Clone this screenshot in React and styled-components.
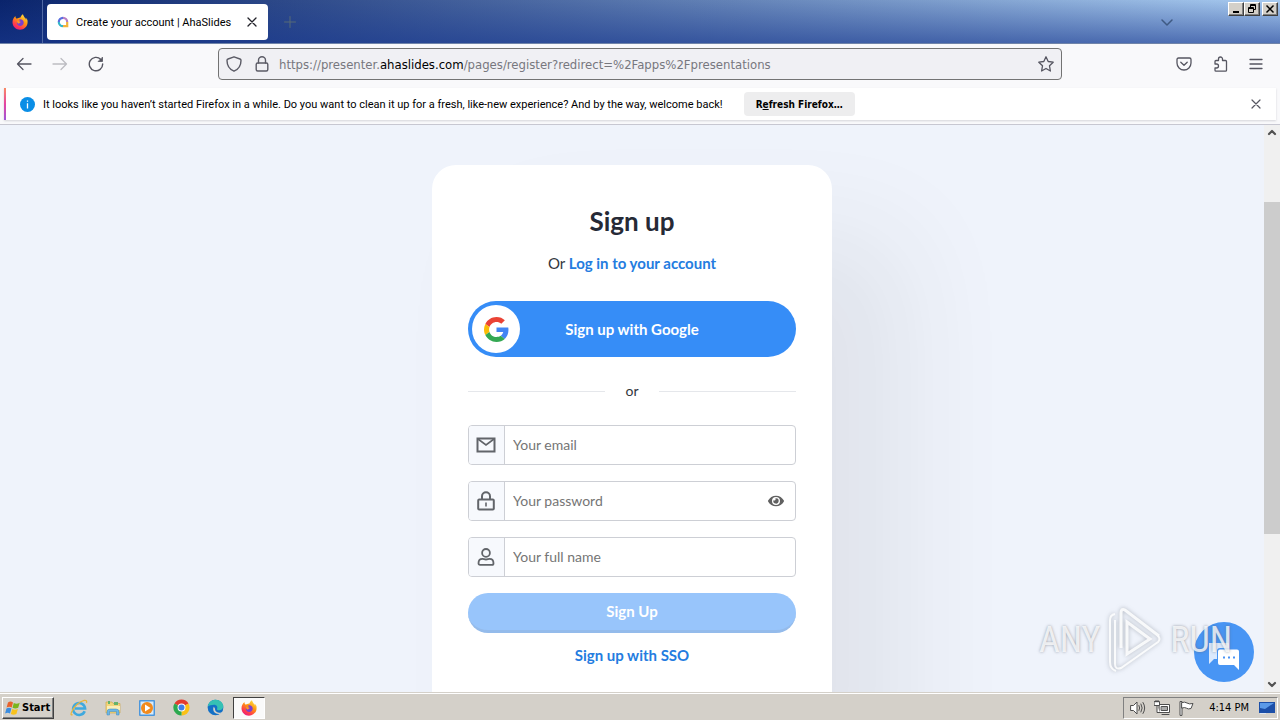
import React from "react";
import styled, { createGlobalStyle, css } from "styled-components";
import { FaEye } from "react-icons/fa";

const GlobalStyle = createGlobalStyle`
  :root {
    --ui: Roboto, Tahoma, sans-serif;
    --uiWide: "DejaVu Sans Condensed", "DejaVu Sans", Tahoma, sans-serif;
    --site: Lato, Nunito, sans-serif;
    --blue: hsl(213, 92%, 59%);
    --link: hsl(212, 75%, 51%);
    --classic: hsl(40, 12%, 81%);
    --icon: hsl(240, 6%, 36%);
  }
  * {
    box-sizing: border-box;
  }
  body {
    margin: 0;
    overflow: hidden;
  }
  button,
  input {
    font: inherit;
    color: inherit;
    margin: 0;
  }
  svg {
    display: block;
    flex: none;
  }
`;

const raised = css`
  border: 1px solid;
  border-color: white hsl(0, 0%, 25%) hsl(0, 0%, 25%) white;
  box-shadow: inset -1px -1px 0 hsl(0, 0%, 50%);
`;

const Desktop = styled.div`
  display: flex;
  flex-direction: column;
  height: 100vh;
  font-family: var(--ui);
  font-size: 11px;
  color: black;
`;

/* browser */

const TabBar = styled.header`
  display: flex;
  flex: none;
  height: 44px;
  border-bottom: 1px solid hsl(219, 25%, 55%);
  background: linear-gradient(
      to bottom,
      hsla(224, 83%, 23%, 0),
      hsla(224, 70%, 33%, 0.6)
    ),
    linear-gradient(to right, hsl(224, 83%, 23%), hsl(211, 71%, 80%));
`;

const FirefoxView = styled.button`
  display: flex;
  align-items: center;
  justify-content: center;
  width: 43px;
  padding: 0 3px 0 0;
  border: 0;
  border-right: 1px solid hsl(222, 35%, 48%);
  background: none;
`;

const Tab = styled.div`
  display: flex;
  align-items: center;
  width: 221px;
  margin: 4px 0 3px 4px;
  padding: 0 8px 0 10px;
  border-radius: 4px;
  background: white;
  white-space: nowrap;
`;

const TabTitle = styled.span`
  flex: 1;
  margin-left: 7px;
`;

const IconButton = styled.button`
  display: flex;
  align-items: center;
  justify-content: center;
  flex: none;
  width: 16px;
  height: 16px;
  padding: 0;
  border: 0;
  background: none;
  color: ${props => props.$color || "var(--icon)"};
`;

const TabActions = styled.div`
  display: flex;
  align-items: center;
  justify-content: space-between;
  flex: 1;
  padding: 0 53px 0 14px;
`;

const WindowButtons = styled.div`
  display: flex;
  padding: 2px 2px 0 0;
`;

const WindowButton = styled.button`
  ${raised};
  display: flex;
  align-items: center;
  justify-content: center;
  width: 16px;
  height: 14px;
  padding: 0;
  background: var(--classic);
  &:last-child {
    margin-left: 2px;
  }
`;

const Toolbar = styled.nav`
  display: grid;
  grid-template-columns: 1fr minmax(0, 844px) 1fr;
  align-items: center;
  flex: none;
  height: 44px;
  padding-bottom: 4px;
  background: hsl(240, 20%, 98%);
`;

const ToolGroup = styled.div`
  display: flex;
  gap: 20px;
  padding: 0 16px;
  justify-content: ${props => (props.$end ? "flex-end" : "flex-start")};
`;

const UrlBar = styled.div`
  display: flex;
  align-items: center;
  height: 32px;
  padding: 0 7px;
  gap: 12px;
  border: 1px solid hsl(0, 0%, 45%);
  border-radius: 4px;
  background: hsl(240, 14%, 95%);
  color: hsl(240, 3%, 48%);
`;

const Url = styled.div`
  flex: 1;
  margin-left: -3px;
  font-family: var(--uiWide);
  font-size: 13px;
  white-space: nowrap;
  overflow: hidden;
  b {
    font-weight: 400;
    color: black;
  }
`;

const NoticeWrap = styled.div`
  flex: none;
  padding: 0 4px 4px;
  border-bottom: 1px solid hsl(240, 10%, 80%);
  background: hsl(240, 20%, 98%);
`;

const Notice = styled.section`
  display: flex;
  align-items: center;
  height: 32px;
  padding: 0 12px 0 14px;
  border-left: 2px solid;
  border-image: linear-gradient(hsl(18, 95%, 68%), hsl(325, 75%, 58%), hsl(270, 65%, 60%)) 1;
  background: white;
  box-shadow: 0 1px 2px hsla(240, 10%, 30%, 0.2);
`;

const NoticeText = styled.p`
  margin: 0 21px 0 8px;
  white-space: nowrap;
`;

const RefreshButton = styled.button`
  height: 24px;
  padding: 0 12px;
  border: 0;
  border-radius: 4px;
  background: hsl(240, 3%, 93%);
  font-family: var(--uiWide);
  font-size: 10px;
  font-weight: 700;
  white-space: nowrap;
`;

const Spacer = styled.span`
  flex: 1;
`;

/* page */

const Viewport = styled.div`
  display: flex;
  flex: 1;
  min-height: 0;
  position: relative;
`;

const Page = styled.main`
  display: flex;
  align-items: flex-start;
  justify-content: center;
  flex: 1;
  overflow: hidden;
  padding-top: 40px;
  background: hsl(220, 60%, 96%);
  font-family: var(--site);
  font-size: 15px;
  color: hsl(220, 10%, 22%);
`;

const Card = styled.form`
  display: flex;
  flex-direction: column;
  width: 100%;
  max-width: 400px;
  padding: 40px 36px 80px;
  border-radius: 24px;
  background: white;
  box-shadow: 72px 72px 110px hsla(220, 10%, 20%, 0.08);
`;

const Title = styled.h1`
  margin: 0;
  font-size: 26px;
  line-height: 32px;
  font-weight: 700;
  text-align: center;
  color: hsl(225, 18%, 18%);
`;

const LoginLine = styled.p`
  margin: 16px 0 28px;
  line-height: 20px;
  text-align: center;
`;

const Link = styled.a`
  color: var(--link);
  font-weight: 700;
  text-decoration: none;
  text-align: center;
`;

const GoogleButton = styled.button`
  display: grid;
  grid-template-columns: 48px 1fr 48px;
  align-items: center;
  height: 56px;
  padding: 4px;
  border: 0;
  border-radius: 28px;
  background: var(--blue);
  color: white;
  font-weight: 700;
`;

const GoogleLogo = styled.span`
  display: flex;
  align-items: center;
  justify-content: center;
  height: 48px;
  border-radius: 50%;
  background: white;
`;

const Divider = styled.div`
  display: flex;
  align-items: center;
  gap: 20px;
  margin: 24px 0;
  font-size: 14px;
  line-height: 20px;
  &::before,
  &::after {
    content: "";
    flex: 1;
    height: 1px;
    background: hsl(220, 13%, 91%);
  }
`;

const Field = styled.div`
  display: flex;
  height: 40px;
  margin-bottom: 16px;
  border: 1px solid hsl(225, 9%, 82%);
  border-radius: 4px;
  overflow: hidden;
`;

const FieldIcon = styled.label`
  display: flex;
  align-items: center;
  justify-content: center;
  width: 36px;
  padding-right: 1px;
  border-right: 1px solid hsl(225, 9%, 82%);
  background: hsl(220, 60%, 98%);
  color: hsl(220, 4%, 40%);
`;

const FieldInput = styled.input`
  flex: 1;
  min-width: 0;
  padding: 0 8px 2px;
  border: 0;
  outline: none;
  background: none;
  font-size: 14px;
  ::placeholder {
    color: hsl(220, 3%, 53%);
    opacity: 1;
  }
`;

const EyeButton = styled(IconButton)`
  align-self: center;
  margin-right: 11px;
`;

const SubmitButton = styled.button`
  height: 40px;
  padding: 0 0 2px;
  border: 0;
  border-bottom: 3px solid hsl(213, 68%, 75%);
  border-radius: 20px;
  background: hsl(213, 92%, 79%);
  color: white;
  font-weight: 700;
`;

const SsoLink = styled(Link)`
  margin-top: 12px;
  line-height: 20px;
`;

const Scrollbar = styled.div`
  display: flex;
  flex-direction: column;
  align-items: center;
  width: 16px;
  background: hsl(0, 0%, 94%);
  color: hsl(0, 0%, 32%);
`;

const Track = styled.div`
  flex: ${props => props.$grow};
  width: 100%;
  background: ${props => (props.$thumb ? "hsl(0, 0%, 80%)" : "none")};
`;

const ChatButton = styled.button`
  position: absolute;
  right: 26px;
  bottom: 10px;
  display: flex;
  align-items: center;
  justify-content: center;
  width: 60px;
  height: 60px;
  padding: 8px 0 0;
  border: 0;
  border-radius: 50%;
  background: hsl(213, 89%, 62%);
`;

const Watermark = styled.div`
  position: absolute;
  right: 48px;
  bottom: 18px;
  display: flex;
  align-items: center;
  gap: 6px;
  font-family: "Liberation Sans Narrow", "Roboto Condensed", "Liberation Sans", sans-serif;
  font-size: 36px;
  line-height: 68px;
  color: hsla(0, 0%, 100%, 0.8);
  text-shadow: 0 0 3px hsla(220, 10%, 40%, 0.6);
  pointer-events: none;
  svg {
    filter: drop-shadow(0 0 2px hsla(220, 10%, 40%, 0.5));
  }
`;

/* taskbar */

const Taskbar = styled.footer`
  display: flex;
  align-items: center;
  flex: none;
  height: 28px;
  padding: 2px 2px 0;
  border-top: 1px solid var(--classic);
  box-shadow: inset 0 1px 0 white;
  background: var(--classic);
`;

const StartButton = styled.button`
  ${raised};
  display: flex;
  align-items: center;
  gap: 1px;
  height: 22px;
  margin-right: 9px;
  padding: 0 3px 0 2px;
  background: var(--classic);
  font-family: var(--uiWide);
  font-weight: 700;
`;

const TaskButton = styled.button`
  display: flex;
  align-items: center;
  justify-content: center;
  width: 32px;
  height: 22px;
  margin-right: 2px;
  padding: 0;
  border: 1px solid transparent;
  background: none;
  ${props =>
    props.$active &&
    css`
      border-color: hsl(0, 0%, 25%) white white hsl(0, 0%, 25%);
      background: hsl(0, 0%, 98%);
    `}
`;

const Tray = styled.div`
  display: flex;
  align-items: center;
  gap: 8px;
  height: 22px;
  margin-left: auto;
  padding: 0 2px 0 6px;
  border: 1px solid;
  border-color: hsl(0, 0%, 50%) white white hsl(0, 0%, 50%);
  color: hsl(0, 0%, 30%);
`;

const Clock = styled.time`
  margin: 0 2px 0 7px;
  font-family: var(--uiWide);
  color: black;
  white-space: nowrap;
`;

/* icons */

const Line = ({ size = 16, width = 1.4, children, ...rest }) => (
  <svg
    width={size}
    height={size}
    viewBox="0 0 16 16"
    fill="none"
    stroke="currentColor"
    strokeWidth={width}
    strokeLinecap="round"
    strokeLinejoin="round"
    aria-hidden="true"
    {...rest}
  >
    {children}
  </svg>
);

const FirefoxIcon = ({ size = 16, id }) => (
  <svg width={size} height={size} viewBox="0 0 16 16" aria-hidden="true">
    <defs>
      <linearGradient id={id} x1="0.8" y1="0" x2="0.2" y2="1">
        <stop offset="0" stopColor="#ffe34a" />
        <stop offset="0.4" stopColor="#ff980e" />
        <stop offset="0.75" stopColor="#ff3b4b" />
        <stop offset="1" stopColor="#e3158a" />
      </linearGradient>
    </defs>
    <path
      d="M15.400 6.100c-.4-1-1.200-2-1.900-2.300.5 1 .8 1.900.9 2.400C13.200 3.500 11.600 2.600 10.900.200 9.300 1.200 8.700 2.700 8.500 3.500c-1 .1-1.900.4-2.600.8-.8.2-1.700.100-2-.4-.3-.4-.5-1.300-.4-2C1.700 3.200.5 5.500.5 8.200.5 12.300 3.900 15.700 8 15.700s7.600-3.300 7.600-7.500c0-.7 0-1.400-.2-2.100z"
      fill={`url(#${id})`}
    />
    <path
      d="M8.200 5.300c2 0 3.500 1.400 3.500 3.300 0 2-1.600 3.400-3.500 3.400S4.800 10.600 4.800 8.800c0-.7.2-1.200.5-1.700.8-.3 1.600 0 2 .5h1.200c.2-.5-.8-1-1.400-1.300-.2-.5.4-1 1.100-1z"
      fill="#7a3fd0"
    />
    <path d="M5 7c.8-.4 1.700-.2 2.200.5.5.4 1.300.2 1.300.6 0 .7-1.100.8-1.500 1.500-.9.2-2-.9-2-2.600z" fill="#ff9a1a" />
  </svg>
);

const AhaIcon = () => (
  <svg width="12" height="12" viewBox="0 0 12 12" fill="none" strokeWidth="2.200" aria-hidden="true">
    <path d="M6 1.800A4.200 4.200 0 0 0 1.800 6" stroke="#5a6fe0" />
    <path d="M1.800 6A4.200 4.200 0 0 0 6 10.200" stroke="#35b6c9" />
    <path d="M6 10.200H10.200V6" stroke="#f2b33c" />
    <path d="M10.200 6A4.200 4.200 0 0 0 6 1.800" stroke="#b77fc4" />
  </svg>
);

const InfoIcon = () => (
  <svg width="15" height="15" viewBox="0 0 15 15" aria-hidden="true">
    <circle cx="7.500" cy="7.500" r="7.500" fill="#0a8ee6" />
    <path d="M7.500 3.400v1.300M7.500 6.200v5.200" stroke="white" strokeWidth="1.300" />
  </svg>
);

const GoogleIcon = () => (
  <svg width="25" height="25" viewBox="0 0 48 48" aria-hidden="true">
    <path
      fill="#ea4335"
      d="M24 9.500c3.540 0 6.710 1.220 9.210 3.600l6.850-6.850C35.900 2.380 30.470 0 24 0 14.620 0 6.510 5.380 2.560 13.220l7.980 6.190C12.430 13.720 17.740 9.500 24 9.500z"
    />
    <path
      fill="#4285f4"
      d="M46.980 24.550c0-1.570-.15-3.090-.38-4.550H24v9.020h12.940c-.58 2.960-2.260 5.480-4.780 7.180l7.730 6c4.510-4.180 7.090-10.360 7.090-17.650z"
    />
    <path
      fill="#fbbc05"
      d="M10.530 28.590c-.48-1.450-.76-2.990-.76-4.590s.27-3.140.76-4.590l-7.980-6.190C.92 16.460 0 20.120 0 24c0 3.880.92 7.540 2.560 10.780l7.970-6.190z"
    />
    <path
      fill="#34a853"
      d="M24 48c6.480 0 11.930-2.130 15.890-5.810l-7.730-6c-2.150 1.450-4.920 2.300-8.160 2.300-6.260 0-11.570-4.220-13.470-9.910l-7.980 6.190C6.510 42.620 14.620 48 24 48z"
    />
  </svg>
);

const MailIcon = () => (
  <svg width="20" height="16" viewBox="0 0 20 16" fill="none" stroke="currentColor" strokeWidth="2" aria-hidden="true">
    <path d="M1.500 1.500h17v13h-17z" />
    <path d="M2 2l8 6 8-6" strokeWidth="1.600" />
  </svg>
);

const PadlockIcon = () => (
  <svg width="18" height="20" viewBox="0 0 18 20" fill="none" stroke="currentColor" strokeWidth="2" aria-hidden="true">
    <rect x="1.200" y="8.500" width="15.600" height="10" rx="1" />
    <path d="M5 8.500V5.200a4 4 0 0 1 8 0v3.300" />
    <path d="M9 11.500v4" strokeWidth="1.600" />
  </svg>
);

const PersonIcon = () => (
  <svg width="18" height="18" viewBox="0 0 18 18" fill="none" stroke="currentColor" strokeWidth="1.800" aria-hidden="true">
    <circle cx="9" cy="4.900" r="3.900" />
    <path d="M1.500 15.200c0-2.600 1.600-4.300 4-4.300 1.300 0 1.900.6 3.500.6s2.200-.6 3.500-.6c2.400 0 4 1.700 4 4.300 0 1-.6 1.700-1.500 1.700H3c-.9 0-1.500-.7-1.500-1.700z" />
  </svg>
);

const ChatIcon = () => (
  <svg width="32" height="28" viewBox="0 0 32 28" aria-hidden="true">
    <path d="M1 1h19q1 0 1 1v4H12q-3 0-3 3v8H6l-5 5z" fill="#dbe9fd" />
    <path d="M12 7.500h17q2 0 2 2V28l-5-5H12q-2 0-2-2V9.500q0-2 2-2z" fill="white" />
    <path d="M15 15.500h2M20 15.500h2M25 15.500h2" stroke="#4a93f5" strokeWidth="2" />
  </svg>
);

const PlayMark = () => (
  <svg width="58" height="68" viewBox="0 0 58 68" fill="none" stroke="white" strokeOpacity="0.85" aria-hidden="true">
    <path d="M15 42V7q0-5 4-3l34 26" strokeWidth="3" />
    <path d="M9 8q-5 1-5 6v42q0 7 6 9" strokeWidth="2" />
    <path d="M9 14v44q0 6 6 4l37-26q3-3 0-6" strokeWidth="2" />
    <path d="M21 16v32l23-15z" strokeWidth="3" />
  </svg>
);

const WindowsFlag = () => (
  <svg width="16" height="16" viewBox="0 0 16 16" aria-hidden="true">
    <path d="M3 2.500C5 1 6.500 1.500 8 2.500L6.700 7.500C5 6.500 3.500 6.500 1.600 7.600z" fill="#e8622c" />
    <path d="M8.800 3c1.900 1 3.700 1 5.900-.2l-1.500 5c-2 1-3.700 1-5.700 0z" fill="#7ab51d" />
    <path d="M1.400 8.500c1.700-1 3.300-1 5-.1L5 13.500c-1.500-1-3-1-4.900 0z" fill="#3b8de0" />
    <path d="M7.200 8.900c1.900 1 3.600 1 5.700 0l-1.500 5c-2 1.100-3.700 1-5.600 0z" fill="#f8c21c" />
  </svg>
);

const ExplorerIcon = () => (
  <svg width="18" height="18" viewBox="0 0 18 18" fill="none" aria-hidden="true">
    <path d="M14.700 12.200A6 6 0 1 1 15.100 9.500H5" stroke="#3fa9de" strokeWidth="2.600" />
    <path d="M2.500 15.500C-1 18 2 10 7 5.500S18-.5 16.500 4" stroke="#e9b53a" strokeWidth="1.200" />
  </svg>
);

const FolderIcon = () => (
  <svg width="18" height="18" viewBox="0 0 18 18" aria-hidden="true">
    <path d="M2 3h6l1 1.500h7V14H2z" fill="#f3d67c" stroke="#c9a23f" strokeWidth="0.600" />
    <path d="M4 2h2v3H4zM10 3h4v3h-4z" fill="#67b36b" />
    <path d="M3 7h13v4H3z" fill="#fbeeb7" />
    <path d="M3 16v-3q0-3 3-3h6q3 0 3 3v3h-2.500v-3.500h-7V16z" fill="#6cb6e6" stroke="#3a8bc0" strokeWidth="0.500" />
  </svg>
);

const PlayerIcon = () => (
  <svg width="18" height="18" viewBox="0 0 18 18" aria-hidden="true">
    <rect x="1" y="1" width="16" height="16" rx="1" fill="#4c97dc" />
    <rect x="2.500" y="2.500" width="13" height="13" fill="#d7ebfb" />
    <circle cx="9" cy="9" r="6" fill="#f28a1c" />
    <path d="M7 5.500l5.500 3.500L7 12.500z" fill="white" />
  </svg>
);

const ChromeIcon = () => (
  <svg width="17" height="17" viewBox="0 0 18 18" aria-hidden="true">
    <path d="M9 9L1.600 4.700A8.500 8.500 0 0 1 16.400 4.800z" fill="#e33b2e" />
    <path d="M9 9L16.400 4.800A8.500 8.500 0 0 1 9 17.500z" fill="#fbc116" />
    <path d="M9 9V17.500A8.500 8.500 0 0 1 1.600 4.700z" fill="#2da94f" />
    <circle cx="9" cy="9" r="4.200" fill="white" />
    <circle cx="9" cy="9" r="3.200" fill="#3f7fe8" />
  </svg>
);

const EdgeIcon = () => (
  <svg width="17" height="17" viewBox="0 0 18 18" aria-hidden="true">
    <circle cx="9" cy="9" r="8.300" fill="#1370c6" />
    <path d="M.8 8C1.500 3.500 5 .7 9.200.7c4.600 0 8 3.300 8 7 0 2.700-2 4.300-4.500 4.300-1.700 0-2.500-.7-2-1.600.9-1.800-.5-4.200-3.200-4.200C4.800 6.200 2 7 .8 8z" fill="#35c1b4" />
    <path d="M7.300 8.300c-2 3 .2 7.600 5 7.700 2 0 3.300-.8 4.200-2-2.700 1.200-8.300.5-8-3.700z" fill="#d4d0c8" />
  </svg>
);

const SpeakerIcon = () => (
  <Line width={1}>
    <path d="M1 5.500h2.500L7 2v12L3.500 10.500H1z" fill="white" />
    <path d="M9 5.500q1.500 2.500 0 5M11 4q2.500 4 0 8M13 2.500q3.500 5.500 0 11" />
  </Line>
);

const NetworkIcon = () => (
  <Line width={1}>
    <path d="M5.500 4.500h10v8h-10z" fill="white" />
    <path d="M7.500 6.500h6v4h-6z" fill="#aaa" />
    <path d="M.5 1.500h5v4h-5zM2 0v2M4 0v2M3 5.500v7h3M8 14.500h7" fill="white" />
  </Line>
);

const FlagIcon = () => (
  <Line width={1}>
    <path d="M2 15V1.500h2V15z" fill="white" />
    <path d="M4 2.500q3-1 5 .5t6 .5l-2 5q-3 1-4.500-.3T4 8z" fill="white" />
  </Line>
);

const MonitorIcon = () => (
  <svg width="16" height="14" viewBox="0 0 16 14" aria-hidden="true">
    <rect x="0" y="1" width="16" height="11" fill="#1c4fa8" />
    <path d="M1 2h14L6 8 1 7z" fill="#5b9ae8" />
    <path d="M1 12h6v1H1z" fill="#dde6f2" />
  </svg>
);

const fields = [
  { id: "email", type: "email", label: "Your email", icon: <MailIcon /> },
  { id: "password", type: "password", label: "Your password", icon: <PadlockIcon /> },
  { id: "name", type: "text", label: "Your full name", icon: <PersonIcon /> }
];

const Browser = () => (
  <>
    <TabBar>
      <FirefoxView type="button" aria-label="Firefox View">
        <FirefoxIcon id="fx-view" />
      </FirefoxView>
      <Tab>
        <AhaIcon />
        <TabTitle>Create your account | AhaSlides</TabTitle>
        <IconButton type="button" aria-label="Close tab" $color="hsl(240, 10%, 15%)">
          <Line width={1.3}>
            <path d="M4 4l8 8M12 4l-8 8" />
          </Line>
        </IconButton>
      </Tab>
      <TabActions>
        <IconButton type="button" aria-label="New tab" $color="hsl(200, 16%, 40%)">
          <Line width={1}>
            <path d="M8 2.500v11M2.500 8h11" />
          </Line>
        </IconButton>
        <IconButton type="button" aria-label="List all tabs" $color="hsl(216, 35%, 38%)">
          <Line width={1.5}>
            <path d="M3 6l5 5 5-5" />
          </Line>
        </IconButton>
      </TabActions>
      <WindowButtons>
        <WindowButton type="button" aria-label="Minimize">
          <svg width="10" height="10" viewBox="0 0 10 10">
            <path d="M2 7h6v2H2z" />
          </svg>
        </WindowButton>
        <WindowButton type="button" aria-label="Restore">
          <svg width="10" height="10" viewBox="0 0 10 10" fill="none" stroke="black">
            <path d="M3.500 3V.5h5v5H6M3 1.500h6M1.500 3.500h5v5h-5zM1 4.500h6" />
          </svg>
        </WindowButton>
        <WindowButton type="button" aria-label="Close">
          <svg width="10" height="10" viewBox="0 0 10 10" stroke="black" strokeWidth="1.500">
            <path d="M1.500 1.500l7 7M8.500 1.500l-7 7" />
          </svg>
        </WindowButton>
      </WindowButtons>
    </TabBar>
    <Toolbar>
      <ToolGroup>
        <IconButton type="button" aria-label="Back">
          <Line width={1.3}>
            <path d="M15 8H1.500M7 2.500L1.500 8 7 13.500" />
          </Line>
        </IconButton>
        <IconButton type="button" aria-label="Forward" $color="hsl(240, 4%, 75%)">
          <Line width={1.3}>
            <path d="M1 8h13.500M9 2.500L14.500 8 9 13.500" />
          </Line>
        </IconButton>
        <IconButton type="button" aria-label="Reload">
          <Line width={1.4}>
            <path d="M12.800 3.400A6.700 6.700 0 1 0 14.700 8" />
            <path d="M14.500 1.500v4h-4z" fill="currentColor" strokeWidth="0.800" />
          </Line>
        </IconButton>
      </ToolGroup>
      <UrlBar>
        <Line color="#5b5b66">
          <path d="M8 .8l6 2.200q1 .4 1 1.500c0 5-2.500 8.800-7 10.700C3.500 13.300 1 9.500 1 4.500 1 3.400 1.400 3.200 2 3z" />
        </Line>
        <Line color="#5b5b66">
          <rect x="2.200" y="7" width="11.600" height="8" rx="1.500" />
          <path d="M4.500 7V4.200a3.500 3.500 0 0 1 7 0V7" />
        </Line>
        <Url>
          https://presenter.<b>ahaslides.com</b>/pages/register?redirect=%2Fapps%2Fpresentations
        </Url>
        <IconButton type="button" aria-label="Bookmark this page">
          <Line width={1.3}>
            <path d="M8 .8l2.200 4.700 5 .7-3.700 3.600.9 5.200L8 12.500 3.600 15l.9-5.200L.8 6.200l5-.7z" />
          </Line>
        </IconButton>
      </UrlBar>
      <ToolGroup $end>
        <IconButton type="button" aria-label="Save to Pocket">
          <Line width={1.3}>
            <path d="M2.500 2h11q1.500 0 1.500 1.500V7A7 7 0 0 1 1 7V3.500Q1 2 2.500 2z" />
            <path d="M4.800 6.200L8 9.300l3.200-3.100" />
          </Line>
        </IconButton>
        <IconButton type="button" aria-label="Extensions">
          <Line width={1.3}>
            <path d="M4 15.200h9.500q1 0 1-1V5.500q0-1-1-1h-3V3a2 2 0 0 0-4 0v1.500H4q-1 0-1 1V8h1.500a2 2 0 0 1 0 4H3v2.200q0 1 1 1z" />
          </Line>
        </IconButton>
        <IconButton type="button" aria-label="Open application menu">
          <Line width={1.3}>
            <path d="M2 3.500h12M2 8h12M2 12.500h12" />
          </Line>
        </IconButton>
      </ToolGroup>
    </Toolbar>
    <NoticeWrap>
      <Notice>
        <InfoIcon />
        <NoticeText>
          It looks like you haven’t started Firefox in a while. Do you want to clean it up for a
          fresh, like-new experience? And by the way, welcome back!
        </NoticeText>
        <RefreshButton type="button">
          R<u>e</u>fresh Firefox…
        </RefreshButton>
        <Spacer />
        <IconButton type="button" aria-label="Dismiss">
          <Line width={1.2}>
            <path d="M4 4l8 8M12 4l-8 8" />
          </Line>
        </IconButton>
      </Notice>
    </NoticeWrap>
  </>
);

const SignUp = () => (
  <Page>
    <Card onSubmit={e => e.preventDefault()}>
      <Title>Sign up</Title>
      <LoginLine>
        Or <Link href="#login">Log in to your account</Link>
      </LoginLine>
      <GoogleButton type="button">
        <GoogleLogo>
          <GoogleIcon />
        </GoogleLogo>
        Sign up with Google
      </GoogleButton>
      <Divider>or</Divider>
      {fields.map(({ id, type, label, icon }) => (
        <Field key={id}>
          <FieldIcon htmlFor={id}>{icon}</FieldIcon>
          <FieldInput id={id} type={type} placeholder={label} aria-label={label} />
          {type === "password" && (
            <EyeButton type="button" aria-label="Show password" $color="hsl(0, 0%, 38%)">
              <FaEye size={16} />
            </EyeButton>
          )}
        </Field>
      ))}
      <SubmitButton type="submit">Sign Up</SubmitButton>
      <SsoLink href="#sso">Sign up with SSO</SsoLink>
    </Card>
  </Page>
);

export default function App() {
  return (
    <Desktop>
      <GlobalStyle />
      <Browser />
      <Viewport>
        <SignUp />
        <Scrollbar>
          <Line width={2.2}>
            <path d="M5 9l3-3 3 3" />
          </Line>
          <Track $grow={61} />
          <Track $grow={332} $thumb />
          <Track $grow={142} />
          <Line width={2.2}>
            <path d="M5 7l3 3 3-3" />
          </Line>
        </Scrollbar>
        <ChatButton type="button" aria-label="Open chat">
          <ChatIcon />
        </ChatButton>
        <Watermark>
          <span>ANY</span>
          <PlayMark />
          <span>RUN</span>
        </Watermark>
      </Viewport>
      <Taskbar>
        <StartButton type="button">
          <WindowsFlag />
          Start
        </StartButton>
        <TaskButton type="button" aria-label="Internet Explorer">
          <ExplorerIcon />
        </TaskButton>
        <TaskButton type="button" aria-label="Windows Explorer">
          <FolderIcon />
        </TaskButton>
        <TaskButton type="button" aria-label="Media Player">
          <PlayerIcon />
        </TaskButton>
        <TaskButton type="button" aria-label="Chrome">
          <ChromeIcon />
        </TaskButton>
        <TaskButton type="button" aria-label="Edge">
          <EdgeIcon />
        </TaskButton>
        <TaskButton type="button" aria-label="Firefox" $active>
          <FirefoxIcon id="fx-task" />
        </TaskButton>
        <Tray>
          <SpeakerIcon />
          <NetworkIcon />
          <FlagIcon />
          <Clock>4:14 PM</Clock>
          <MonitorIcon />
        </Tray>
      </Taskbar>
    </Desktop>
  );
}
